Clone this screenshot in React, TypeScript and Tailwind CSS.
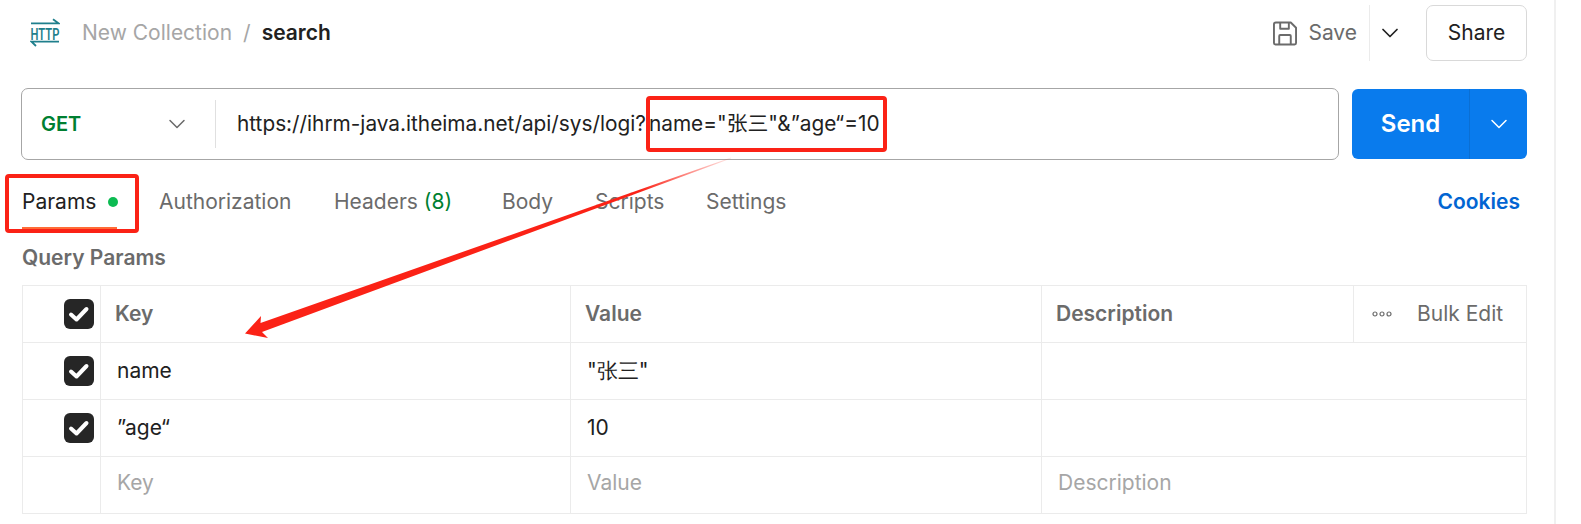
import * as React from 'react';
import { ChevronDown } from 'lucide-react';

const cellBorder = 'border-r border-[#ebebeb]';

const HttpIcon = () => (
    <svg width="30" height="30" viewBox="0 0 30 30" fill="none" className="shrink-0">
        <path d="M1 5.300H28.500L23 1.300" stroke="#1f7f8c" strokeWidth="1.800" />
        <path d="M29 23.700H1.500L6 28" stroke="#1f7f8c" strokeWidth="1.800" />
        <text transform="translate(15 21.500) scale(0.66 1)" textAnchor="middle" fontSize="17" fontWeight="600" fill="#1f7f8c" fontFamily="Roboto, sans-serif">HTTP</text>
    </svg>
);

const SaveIcon = () => (
    <svg width="24" height="25" viewBox="0 0 25 25" fill="none" stroke="#6b6b6b" strokeWidth="2" strokeLinejoin="round">
        <path d="M3 1H18.500L24 6.500V22.500A1.500 1.500 0 0 1 22.500 24H2.500A1.500 1.500 0 0 1 1 22.500V3A2 2 0 0 1 3 1Z" />
        <path d="M7.500 1V7.500H16.500V1" />
        <path d="M6.500 24V15A1 1 0 0 1 7.500 14H17.500A1 1 0 0 1 18.500 15V24" />
    </svg>
);

const Check = () => (
    <div className="w-[30px] h-[30px] rounded-[6px] bg-[#262626] flex items-center justify-center shrink-0">
        <svg width="22" height="22" viewBox="0 0 22 22" fill="none">
            <path d="M3 11.500L8.500 16.500L18.500 6" stroke="#fff" strokeWidth="4" strokeLinecap="round" strokeLinejoin="round" />
        </svg>
    </div>
);

const Row = ({ k, v, d, checked, muted }: { k: string; v: string; d?: string; checked?: boolean; muted?: boolean }) => (
    <div className={`flex h-[57px] border-b border-[#ebebeb] text-[21px] ${muted ? 'text-[#a6a6a6]' : 'text-[#212121]'}`}>
        <div className={`w-[78px] flex items-center justify-end pr-[6px] ${cellBorder}`}>{checked && <Check />}</div>
        <div className={`w-[470px] flex items-center pl-[16px] ${cellBorder} ${muted ? 'pb-[4px]' : ''}`}>{k}</div>
        <div className={`w-[471px] flex items-center pl-[16px] ${cellBorder} ${muted ? 'pb-[4px]' : ''}`}>{v}</div>
        <div className={`flex-1 flex items-center pl-[16px] ${muted ? 'pb-[4px]' : ''}`}>{d}</div>
    </div>
);

const Annotations = () => (
    <>
        <div className="absolute left-[646px] top-[96px] w-[241px] h-[56px] border-[4.500px] border-[#fb2216] rounded-[4px]" />
        <div className="absolute left-[5px] top-[174px] w-[134px] h-[59px] border-[4.500px] border-[#fb2216] rounded-[4px]" />
        <svg className="absolute left-0 top-0 pointer-events-none" width="1581" height="524" viewBox="0 0 1581 524" fill="none">
            <defs>
                <linearGradient id="tail" gradientUnits="userSpaceOnUse" x1="731" y1="158" x2="640" y2="192">
                    <stop offset="0" stopColor="#fb2216" stopOpacity="0.1" />
                    <stop offset="1" stopColor="#fb2216" />
                </linearGradient>
            </defs>
            <path d="M731 157.500L260.500 323L261 316L245 333.500L268 338L262 332L731 158.500Z" fill="url(#tail)" />
        </svg>
    </>
);

export default function App() {
    return (
        <div className="relative w-[1581px] h-[524px] overflow-hidden bg-white font-['Inter',sans-serif]">
            <div className="w-[1554px] h-full border-r-2 border-[#f0f0f0] box-content">
                {/* top bar */}
                <div className="flex items-center justify-between h-[66px] pl-[30px] pr-[27px]">
                    <div className="flex items-center text-[21px]">
                        <HttpIcon />
                        <span className="ml-[22px] text-[#a6a6a6]">New Collection</span>
                        <span className="mx-[11px] text-[#a6a6a6]">/</span>
                        <span className="font-semibold text-[#212121]">search</span>
                    </div>
                    <div className="flex items-center h-[56px]">
                        <SaveIcon />
                        <span className="ml-[11px] text-[21px] text-[#6b6b6b]">Save</span>
                        <div className="ml-[12px] w-px h-[56px] bg-[#ebebeb]" />
                        <ChevronDown size={28} strokeWidth={1.500} className="ml-[6px] mr-[10px] text-[#212121]" />
                        <button className="ml-[12px] w-[101px] h-[56px] rounded-[7px] border border-[#d9d9d9] text-[21px] text-[#212121]">Share</button>
                    </div>
                </div>

                {/* url bar */}
                <div className="flex items-center gap-[13px] pl-[21px] pr-[27px] mt-[22px]">
                    <div className="flex-1 flex items-center h-[72px] rounded-[7px] border border-[#a6a6a6]">
                        <div className="w-[194px] flex items-center justify-between pl-[19px] pr-[24px] h-[48px] border-r border-[#e0e0e0]">
                            <span className="text-[20px] font-semibold text-[#007f31]">GET</span>
                            <ChevronDown size={28} strokeWidth={1.300} className="text-[#6b6b6b]" />
                        </div>
                        <div className="pl-[21px] text-[20.800px] text-[#212121] whitespace-nowrap font-['Inter','Noto_Sans_CJK_SC',sans-serif]">https://ihrm-java.itheima.net/api/sys/logi?<span className="ml-[3px]">name="张三"&”age“=10</span></div>
                    </div>
                    <div className="flex h-[70px] w-[175px] rounded-[6px] bg-[#097bed] text-white">
                        <div className="w-[118px] flex items-center justify-center text-[24px] font-semibold border-r border-[#0a6fd4]">Send</div>
                        <div className="flex-1 flex items-center justify-center"><ChevronDown size={28} strokeWidth={1.300} /></div>
                    </div>
                </div>

                {/* tabs */}
                <div className="flex items-center justify-between h-[84px] pl-[22px] pr-[34px] text-[21px] text-[#6b6b6b]">
                    <div className="flex items-center h-full">
                        <div className="relative flex items-center h-full w-[137px] text-[#212121]">
                            Params
                            <span className="ml-[12px] w-[10px] h-[10px] rounded-full bg-[#0cbb52]" />
                            <div className="absolute left-0 bottom-[15px] w-[95px] h-[2px] bg-[#ff6c37]" />
                        </div>
                        <span className="w-[175px]">Authorization</span>
                        <span className="w-[168px]">Headers <span className="text-[#007f31]">(8)</span></span>
                        <span className="w-[93px]">Body</span>
                        <span className="w-[111px]">Scripts</span>
                        <span>Settings</span>
                    </div>
                    <span className="font-semibold text-[#0265d2]">Cookies</span>
                </div>

                {/* query params */}
                <div className="pl-[22px] pr-[27px]">
                    <div className="text-[21px] font-semibold text-[#6b6b6b] -mt-[2px] h-[43px]">Query Params</div>
                    <div className="border-t border-l border-r border-[#ebebeb]">
                        <div className="flex h-[57px] border-b border-[#ebebeb] text-[21px] font-semibold text-[#6b6b6b]">
                            <div className={`w-[78px] flex items-center justify-end pr-[6px] ${cellBorder}`}><Check /></div>
                            <div className={`w-[470px] flex items-center pl-[14px] ${cellBorder}`}>Key</div>
                            <div className={`w-[471px] flex items-center pl-[14px] ${cellBorder}`}>Value</div>
                            <div className={`w-[312px] flex items-center pl-[14px] ${cellBorder}`}>Description</div>
                            <div className="flex-1 flex items-center pl-[18px] font-normal">
                                <svg width="20" height="6" viewBox="0 0 20 6" fill="none" stroke="#6b6b6b" strokeWidth="1.200">
                                    <circle cx="3" cy="3" r="2" /><circle cx="10" cy="3" r="2" /><circle cx="17" cy="3" r="2" />
                                </svg>
                                <span className="ml-[25px]">Bulk Edit</span>
                            </div>
                        </div>
                        <Row k="name" v={'"张三"'} checked />
                        <Row k="”age“" v="10" checked />
                        <Row k="Key" v="Value" d="Description" muted />
                    </div>
                </div>
            </div>
            <Annotations />
        </div>
    );
}
